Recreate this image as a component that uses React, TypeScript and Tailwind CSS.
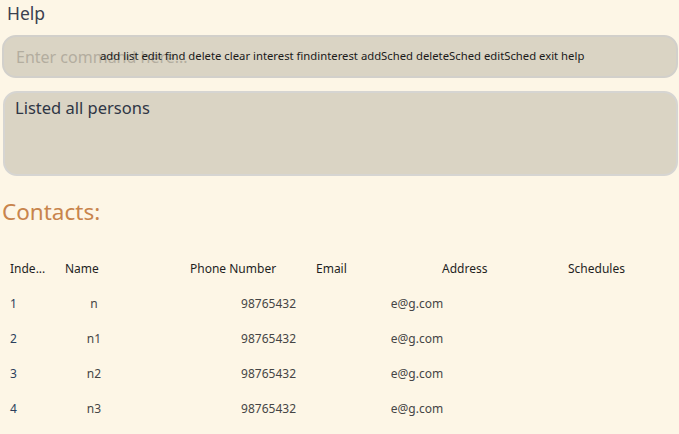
import React from "react";

const persons = [
  { index: 1, name: "n", phone: "98765432", email: "e@g.com" },
  { index: 2, name: "n1", phone: "98765432", email: "e@g.com" },
  { index: 3, name: "n2", phone: "98765432", email: "e@g.com" },
  { index: 4, name: "n3", phone: "98765432", email: "e@g.com" },
];

const headers = [
  { label: "Inde...", w: "w-[55px] pl-[10px]" },
  { label: "Name", w: "w-[135px] pl-[10px]" },
  { label: "Phone Number", w: "w-[126px]" },
  { label: "Email", w: "w-[126px]" },
  { label: "Address", w: "w-[126px]" },
  { label: "Schedules", w: "w-[111px]" },
];

const App = () => {
  return (
    <div
      className="w-[679px] h-[434px] overflow-hidden bg-[#fdf6e6] text-[#3b4150]"
      style={{ fontFamily: '"Noto Sans", "Open Sans", sans-serif' }}
    >
      <div className="pl-[7px] pt-[1px] h-[35px] text-[17.5px] leading-[24px]">Help</div>

      <div className="relative mx-[2px] mr-[1px] h-[43px] rounded-[14px] border-2 border-[#d2d0cb] bg-[#dad4c4] flex items-center pl-[12px]">
        <span className="text-[16px] text-[#b3ad9f]">Enter command here...</span>
        <span className="absolute left-[96px] top-[10px] text-[11.3px] leading-[18px] text-[#1a1a1a] whitespace-nowrap">
          add list edit find delete clear interest findinterest addSched deleteSched editSched exit help
        </span>
      </div>

      <div className="mt-[13px] ml-[3px] mr-[1px] h-[85px] rounded-[14px] border-2 border-[#d6d5d2] bg-[#dad4c4] pl-[10px] pt-[3px]">
        <span className="text-[16.5px] leading-[22px] text-[#2f3645]">Listed all persons</span>
      </div>

      <div className="mt-[21px] pl-[2px] text-[22.5px] leading-[30px] text-[#c8844c]">Contacts:</div>

      <div className="mt-[24px] text-[12px]">
        <div className="flex h-[35px] items-center text-[#1f1f1f]">
          {headers.map((h) => (
            <div key={h.label} className={h.w}>
              {h.label}
            </div>
          ))}
        </div>
        {persons.map((p) => (
          <div key={p.index} className="flex h-[35px] items-center text-[#454545]">
            <div className="w-[55px] pl-[10px] text-[#2c3f5c]">{p.index}</div>
            <div className="w-[78px] text-center">{p.name}</div>
            <div className="w-[173px] pr-[10px] text-right">{p.phone}</div>
            <div className="w-[222px] text-center">{p.email}</div>
          </div>
        ))}
      </div>
    </div>
  );
};

export default App;
